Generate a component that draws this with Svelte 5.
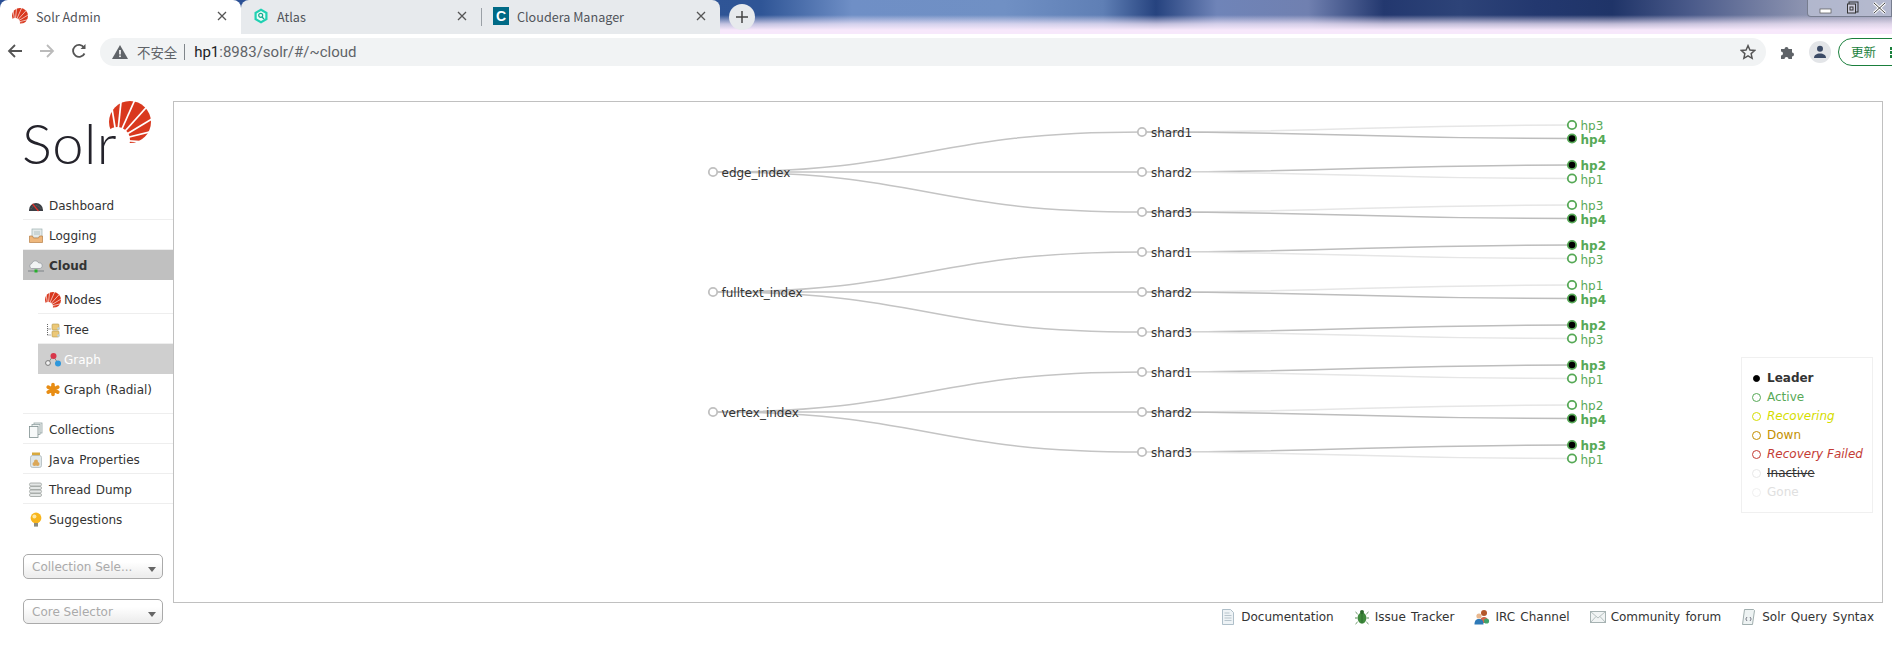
<script>
  // tree layout: every host pair sits 40px apart, shards 40px, collections 120px
  const collections = [
    { name: 'edge_index', shards: [
      [['hp3', false], ['hp4', true]], [['hp2', true], ['hp1', false]], [['hp3', false], ['hp4', true]]
    ] },
    { name: 'fulltext_index', shards: [
      [['hp2', true], ['hp3', false]], [['hp1', false], ['hp4', true]], [['hp2', true], ['hp3', false]]
    ] },
    { name: 'vertex_index', shards: [
      [['hp3', true], ['hp1', false]], [['hp2', false], ['hp4', true]], [['hp3', true], ['hp1', false]]
    ] }
  ];

  const colX = 539, shardX = 968, hostX = 1398;

  function curve(x0, y0, x1, y1) {
    const m = (x0 + x1) / 2;
    return `M${x0},${y0} C${m},${y0} ${m},${y1} ${x1},${y1}`;
  }

  const nodes = collections.map((c, ci) => {
    const y = 70 + ci * 120;
    return {
      name: c.name,
      y,
      shards: c.shards.map((replicas, si) => {
        const sy = y - 40 + si * 40;
        return {
          name: `shard${si + 1}`,
          y: sy,
          hosts: replicas.map(([name, leader], ri) => ({ name, leader, y: sy - 7 + ri * 13.5 }))
        };
      })
    };
  });

  const mainNav = [
    { label: 'Dashboard', icon: 'gauge' },
    { label: 'Logging', icon: 'tray' },
    { label: 'Cloud', icon: 'cloud', active: true }
  ];
  const subNav = [
    { label: 'Nodes', icon: 'sun' },
    { label: 'Tree', icon: 'tree' },
    { label: 'Graph', icon: 'graph', active: true },
    { label: 'Graph (Radial)', icon: 'star' }
  ];
  const lowerNav = [
    { label: 'Collections', icon: 'pages' },
    { label: 'Java Properties', icon: 'jar' },
    { label: 'Thread Dump', icon: 'stack' },
    { label: 'Suggestions', icon: 'bulb' }
  ];
  const legend = [
    { label: 'Leader', cls: 'leader' },
    { label: 'Active', cls: 'active' },
    { label: 'Recovering', cls: 'recovering' },
    { label: 'Down', cls: 'down' },
    { label: 'Recovery Failed', cls: 'failed' },
    { label: 'Inactive', cls: 'inactive' },
    { label: 'Gone', cls: 'gone' }
  ];
  const footer = [
    { label: 'Documentation', icon: 'doc' },
    { label: 'Issue Tracker', icon: 'bug' },
    { label: 'IRC Channel', icon: 'people' },
    { label: 'Community forum', icon: 'mail' },
    { label: 'Solr Query Syntax', icon: 'query' }
  ];
  const tabs = [
    { label: 'Solr Admin', icon: 'sun', active: true },
    { label: 'Atlas', icon: 'atlas' },
    { label: 'Cloudera Manager', icon: 'cloudera' }
  ];

  // sunburst rays, fanned out from the lower left of the disc
  const rayAngles = [-99, -84, -66, -48, -31, -14, 4];
</script>

{#snippet sunburst(size)}
  <svg width={size} height={size} viewBox="0 0 42 42">
    <circle cx="21" cy="21" r="21" fill="#d9381e" />
    {#each rayAngles as a}
      <line x1="8" y1="39" x2={8 + 60 * Math.cos((a * Math.PI) / 180)} y2={39 + 60 * Math.sin((a * Math.PI) / 180)} stroke="#fff" stroke-width="1.7" />
    {/each}
    <circle cx="8" cy="39" r="13" fill="#fff" />
    <path d="M0 42 L0 30 L14 42 Z" fill="#fff" />
  </svg>
{/snippet}

{#snippet icon(name)}
  {#if name === 'sun'}
    {@render sunburst(16)}
  {:else}
    <svg width="16" height="16" viewBox="0 0 16 16">
      {#if name === 'gauge'}
        <path d="M1 12 A7 7 0 0 1 15 12 L15 13 L1 13 Z" fill="#3c3f45" />
        <path d="M3 11 A5.4 5.4 0 0 1 13 11" fill="none" stroke="#777" stroke-width=".8" stroke-dasharray="1 1" />
        <line x1="4.5" y1="6" x2="10.5" y2="13" stroke="#e0312a" stroke-width="1.2" />
      {:else if name === 'tray'}
        <rect x="4" y="1" width="10" height="9" fill="#e4eaea" stroke="#9db1b1" stroke-width=".7" />
        <path d="M6 4h6M6 6h6" stroke="#9db1b1" stroke-width=".7" />
        <path d="M1.5 8h3l1 2h5l1-2h3v6.5h-13z" fill="#eeb77c" stroke="#b87f46" stroke-width=".7" />
      {:else if name === 'cloud'}
        <path d="M3.5 10.5a2.6 2.6 0 0 1 .3-5 3.6 3.6 0 0 1 6.8-.6 2.9 2.9 0 0 1 1.6 5.6z" fill="#f1f3f4" stroke="#8e9499" stroke-width=".7" />
        <path d="M0 13h16" stroke="#7d8287" />
        <rect x="6.5" y="11.5" width="3" height="3" fill="#27b02c" />
      {:else if name === 'tree'}
        <path d="M2.5 2v11M2.5 7h4M2.5 13h4" stroke="#666" stroke-dasharray="1 1" fill="none" />
        <rect x="7" y="2" width="7" height="6" rx="1" fill="#ecc877" stroke="#b3974f" stroke-width=".6" />
        <rect x="7" y="9" width="7" height="6" rx="1" fill="#ecc877" stroke="#b3974f" stroke-width=".6" />
        <circle cx="13.5" cy="6.5" r="1.3" fill="#bcd3de" /><circle cx="13.5" cy="13.5" r="1.3" fill="#bcd3de" />
      {:else if name === 'graph'}
        <path d="M3 11 L8 4 L13 11" stroke="#888" fill="none" />
        <circle cx="8.5" cy="4" r="3" fill="#d8374a" />
        <circle cx="13" cy="11.5" r="3" fill="#2e97dc" />
        <circle cx="3" cy="11" r="2.4" fill="#f2f2f2" stroke="#777" />
      {:else if name === 'star'}
        <g stroke="#e88d14" stroke-width="3.6" stroke-linecap="round">
          <path d="M8 2.5v10M3.2 5.2l9.6 5M12.8 5.2l-9.6 5" />
        </g>
      {:else if name === 'pages'}
        <rect x="6" y="1" width="8" height="10" fill="#eef2f2" stroke="#93a3a3" stroke-width=".8" />
        <rect x="4" y="2.5" width="8" height="10" fill="#eef2f2" stroke="#93a3a3" stroke-width=".8" />
        <rect x="1.5" y="4.5" width="8.5" height="11" fill="#f7f9f9" stroke="#7f9090" stroke-width=".8" />
      {:else if name === 'jar'}
        <rect x="4" y="0.5" width="8" height="3" fill="#d8a93e" />
        <rect x="2.5" y="3.5" width="11" height="12" rx="2" fill="#dfe7ea" stroke="#a8b2b6" stroke-width=".7" />
        <circle cx="6.5" cy="12" r="2" fill="#dba85a" /><circle cx="9.5" cy="12" r="2" fill="#dba85a" /><circle cx="8" cy="9.5" r="2" fill="#dba85a" />
      {:else if name === 'stack'}
        <g fill="#e4e7e6" stroke="#9a9f9d" stroke-width=".8">
          <rect x="1.5" y="1" width="12" height="3" rx="1.4" />
          <rect x="1.5" y="4.5" width="12" height="3" rx="1.4" />
          <rect x="1.5" y="8" width="12" height="3" rx="1.4" />
          <rect x="1.5" y="11.5" width="12" height="3" rx="1.4" />
        </g>
      {:else if name === 'bulb'}
        <circle cx="8" cy="6" r="5.4" fill="#f8b51c" />
        <circle cx="6.4" cy="4.4" r="2" fill="#fde9a5" />
        <rect x="6" y="11" width="4" height="3.6" fill="#8b8b80" />
      {:else if name === 'doc'}
        <path d="M2.5 .5h8l3 3v12h-11z" fill="#eef3f6" stroke="#9db0bc" stroke-width=".8" />
        <path d="M4.5 4h5M4.5 6.5h7M4.5 9h7M4.5 11.5h7" stroke="#a9b9c3" stroke-width=".8" />
      {:else if name === 'bug'}
        <ellipse cx="8" cy="9" rx="4.4" ry="5.6" fill="#3f8a3c" />
        <circle cx="8" cy="3" r="2" fill="#2c6a2c" />
        <path d="M3.6 5L1.5 3M3.4 9H1M3.6 13L1.5 15M12.4 5l2.1-2M12.6 9H15M12.4 13l2.1 2M8 4v10.5" stroke="#2c6a2c" stroke-width=".8" />
      {:else if name === 'people'}
        <circle cx="10" cy="4" r="3" fill="#b4582a" />
        <path d="M6 14c0-4 1-6 4-6s4 2 4 6z" fill="#d1694a" />
        <circle cx="5" cy="7" r="2.6" fill="#e9b88f" />
        <path d="M.5 15.5c0-4 1.6-5.5 4.5-5.5s4.5 1.5 4.5 5.5z" fill="#2e7ab8" />
        <circle cx="12.5" cy="12" r="2.6" fill="#3fa36b" />
      {:else if name === 'mail'}
        <rect x=".5" y="2.5" width="15" height="11" fill="#f1f4f4" stroke="#a6b2b2" />
        <path d="M.5 2.5L8 9l7.5-6.5M.5 13.5L6 7.5M15.5 13.5L10 7.5" fill="none" stroke="#a6b2b2" stroke-width=".8" />
      {:else if name === 'query'}
        <path d="M3.5 .5h9l1 1-2 14h-10z" fill="#eef3f3" stroke="#8a9a9a" stroke-width=".8" />
        <path d="M6 8L4.8 10 6 12M9 8l1.2 2L9 12" fill="none" stroke="#556" stroke-width=".8" />
      {:else if name === 'atlas'}
        <path d="M8 .5l6.5 3.7v7.6L8 15.5 1.5 11.8V4.2z" fill="#1fd1b2" />
        <path d="M8 3l4.3 2.5v5L8 13l-4.3-2.5v-5z" fill="#e9fbf7" />
        <circle cx="7.7" cy="7.3" r="2" fill="none" stroke="#19a98f" stroke-width="1.2" />
        <path d="M9 9l2 2" stroke="#19a98f" stroke-width="1.2" />
      {/if}
    </svg>
  {/if}
{/snippet}

<div class="tabstrip">
  {#each tabs as tab, i}
    <div class="tab" class:on={tab.active} class:sep={i === 2}>
      {#if tab.icon === 'cloudera'}
        <span class="cloudera">C</span>
      {:else}
        {@render icon(tab.icon)}
      {/if}
      <span class="tab-label">{tab.label}</span>
      <svg class="tab-x" width="10" height="10" viewBox="0 0 10 10"><path d="M1 1l8 8M9 1l-8 8" stroke="#555" stroke-width="1.3" /></svg>
    </div>
  {/each}
  <div class="newtab">
    <svg width="12" height="12" viewBox="0 0 12 12"><path d="M6 0v12M0 6h12" stroke="#444" stroke-width="1.5" /></svg>
  </div>
  <div class="winctl">
    <svg width="14" height="14" viewBox="0 0 14 14"><rect x="1" y="8" width="11" height="4" fill="#fff" stroke="#555" stroke-width=".7" /></svg>
    <svg width="14" height="14" viewBox="0 0 14 14"><rect x="3" y="1" width="9" height="10" fill="none" stroke="#333" /><rect x="1.5" y="3" width="8" height="9" fill="#ccd" stroke="#333" /><rect x="4" y="6" width="3" height="3" fill="none" stroke="#333" /></svg>
    <svg class="winx" width="14" height="14" viewBox="0 0 14 14"><path d="M1 2l11 10M12 2L1 12" stroke="#fff" stroke-width="3" /><path d="M1 2l11 10M12 2L1 12" stroke="#444" stroke-width="1" /></svg>
  </div>
</div>

<div class="toolbar">
  <svg class="tool" width="16" height="16" viewBox="0 0 16 16"><path d="M15 8H2M8 2L2 8l6 6" fill="none" stroke="#555" stroke-width="1.8" /></svg>
  <svg class="tool" width="16" height="16" viewBox="0 0 16 16"><path d="M1 8h13M8 2l6 6-6 6" fill="none" stroke="#bbb" stroke-width="1.8" /></svg>
  <svg class="tool" width="16" height="16" viewBox="0 0 16 16"><path d="M13.5 10.5A6 6 0 1 1 13 4.5" fill="none" stroke="#555" stroke-width="1.8" /><path d="M14.5 1v5h-5z" fill="#555" /></svg>
  <div class="addr">
    <svg width="16" height="14" viewBox="0 0 16 14"><path d="M8 0l8 14H0z" fill="#5f6368" /><rect x="7.2" y="5" width="1.6" height="4.5" fill="#fff" /><rect x="7.2" y="10.5" width="1.6" height="1.6" fill="#fff" /></svg>
    <span class="insecure">不安全</span>
    <span class="addr-sep"></span>
    <span class="url"><b>hp1</b>:8983/solr/#/~cloud</span>
    <svg class="star" width="16" height="16" viewBox="0 0 24 24"><path d="M12 2.5l2.9 6.5 7.1.7-5.3 4.7 1.5 7-6.2-3.6-6.2 3.6 1.5-7L2 9.7 9.1 9z" fill="none" stroke="#555" stroke-width="2.2" /></svg>
  </div>
  <svg class="puzzle" width="16" height="16" viewBox="0 0 16 16"><path d="M1 5h3.5a2 2 0 1 1 4 0H12v3.5a2 2 0 1 1 0 4V15H8.5a2 2 0 1 0-4 0H1v-3.5a2 2 0 1 0 0-4z" fill="#5f6368" /></svg>
  <div class="avatar">
    <svg width="14" height="14" viewBox="0 0 14 14"><circle cx="7" cy="3.8" r="3" fill="#3c4b66" /><path d="M1 13c0-3 2.5-4.5 6-4.5s6 1.5 6 4.5z" fill="#3c4b66" /></svg>
  </div>
  <div class="update">更新<span class="dots"></span></div>
</div>

<div class="page">
  <aside class="sidebar">
    <div class="logo">
      <span class="sun">{@render sunburst(42)}</span>
      <span class="wordmark">Solr</span>
    </div>
    <ul class="nav">
      {#each mainNav as item}
        <li class:on={item.active}>{@render icon(item.icon)}<span>{item.label}</span></li>
      {/each}
    </ul>
    <ul class="nav sub">
      {#each subNav as item}
        <li class:on={item.active}>{@render icon(item.icon)}<span>{item.label}</span></li>
      {/each}
    </ul>
    <ul class="nav lower">
      {#each lowerNav as item}
        <li>{@render icon(item.icon)}<span>{item.label}</span></li>
      {/each}
    </ul>
    <div class="select first">Collection Sele...</div>
    <div class="select">Core Selector</div>
  </aside>

  <main class="main">
    <div class="panel">
      <svg class="graph" width="1708" height="499">
        {#each nodes as c}
          {#each c.shards as s}
            <path class="link" d={curve(colX, c.y, shardX, s.y)} />
            {#each s.hosts as h}
              <path class="link" class:lead={h.leader} class:replica={!h.leader} d={curve(shardX, s.y, hostX, h.y)} />
            {/each}
          {/each}
        {/each}
        {#each nodes as c}
          <circle class="node" cx={colX} cy={c.y} r="4.2" />
          <text x={colX + 8.5} y={c.y + 5}>{c.name}</text>
          {#each c.shards as s}
            <circle class="node" cx={shardX} cy={s.y} r="4.2" />
            <text x={shardX + 9} y={s.y + 5}>{s.name}</text>
            {#each s.hosts as h}
              <circle class="host" class:lead={h.leader} cx={hostX} cy={h.y} r="4.2" />
              <text class="hostname" class:lead={h.leader} x={hostX + 8.5} y={h.y + 5}>{h.name}</text>
            {/each}
          {/each}
        {/each}
      </svg>
      <ul class="legend">
        {#each legend as l}
          <li class={l.cls}><i></i><span>{l.label}</span></li>
        {/each}
      </ul>
    </div>
    <div class="footer">
      {#each footer as f}
        <span class="flink">{@render icon(f.icon)}<span>{f.label}</span></span>
      {/each}
    </div>
  </main>
</div>

<style>
  :global(body) {
    margin: 0;
    background: #fff;
    overflow: hidden;
    font-family: "DejaVu Sans", sans-serif;
    font-size: 12px;
    color: #333;
  }
  .tabstrip {
    position: relative;
    height: 34px;
    display: flex;
    background:
      linear-gradient(to bottom, rgba(246, 232, 250, 0) 15px, rgba(246, 232, 250, 0.75) 24px, #f7e8fb 30px),
      linear-gradient(to right, #2a4f95 0, #2f5596 761px, #6f8fc6 852px, #7090c4 1004px, #5f7fb5 1103px, #26437f 1156px, #6f84b8 1217px, #7080b0 1308px, #23386f 1384px, #2d4378 1460px, #23386f 1536px, #1f3468 1612px, #4a5a8a 1690px, #8c93b0 1803px, #9a9db6 1892px);
    font-family: "Noto Sans CJK SC", "Noto Sans", sans-serif;
  }
  .tab {
    width: 240px;
    box-sizing: border-box;
    height: 34px;
    padding: 0 12px 2px 12px;
    display: flex;
    align-items: center;
    gap: 8px;
    background: #e7eaed;
    font-size: 12.6px;
    color: #50545a;
    position: relative;
  }
  .tab:nth-child(2) { border-radius: 8px 0 0 0; }
  .tab:nth-child(3) { border-radius: 0 8px 0 0; width: 239px; }
  .tab.on {
    background: #fff;
    border-radius: 8px 8px 0 0;
    width: 241px;
  }
  .tab.sep::before {
    content: "";
    position: absolute;
    left: 0;
    top: 8px;
    height: 18px;
    width: 1px;
    background: #9aa0a6;
  }
  .tab-label { flex: 1; }
  .tab-x { margin-right: 2px; }
  .cloudera {
    width: 16px;
    height: 18px;
    background: #006a86;
    color: #fff;
    font: bold 14px/18px "Liberation Sans", sans-serif;
    text-align: center;
  }
  .newtab {
    width: 26px;
    height: 26px;
    margin: 4px 0 0 9px;
    border-radius: 50%;
    background: #e7eaed;
    display: flex;
    align-items: center;
    justify-content: center;
  }
  .winctl {
    position: absolute;
    left: 1807px;
    top: 0;
    width: 85px;
    height: 17px;
    box-sizing: border-box;
    border: 1px solid #777d8f;
    border-top: 0;
    border-radius: 0 0 0 4px;
    background: rgba(190, 195, 215, 0.75);
    display: flex;
    align-items: flex-start;
    gap: 13px;
    padding: 1px 0 0 11px;
  }
  .toolbar {
    height: 34px;
    display: flex;
    align-items: center;
    background: #fff;
    font-family: "Noto Sans CJK SC", "Noto Sans", sans-serif;
    padding-left: 7px;
    box-sizing: border-box;
    overflow: hidden;
  }
  .toolbar > * { flex: none; }
  .tool { margin-right: 16px; }
  .tool:nth-child(3) { margin-right: 13px; }
  .addr {
    width: 1666px;
    height: 28px;
    box-sizing: border-box;
    border-radius: 14px;
    background: #f1f3f4;
    display: flex;
    align-items: center;
    padding: 0 10px 0 12px;
    margin-top: 2px;
  }
  .insecure {
    font-size: 13.4px;
    color: #5f6368;
    margin-left: 9px;
  }
  .addr-sep {
    width: 1px;
    height: 16px;
    background: #80868b;
    margin: 0 9px 0 7px;
  }
  .url {
    font-family: Roboto, sans-serif;
    font-size: 15px;
    color: #5f6368;
    flex: 1;
  }
  .url b { font-weight: 400; color: #202124; }
  .puzzle { margin: 2px 0 0 14px; }
  .avatar {
    width: 22px;
    height: 22px;
    margin: 2px 0 0 13px;
    border-radius: 50%;
    background: #e3e5e8;
    display: flex;
    align-items: center;
    justify-content: center;
  }
  .update {
    margin: 2px 0 0 7px;
    width: 80px;
    height: 28px;
    box-sizing: border-box;
    border: 1px solid #1a7f3c;
    border-radius: 14px;
    color: #1a7f3c;
    font-size: 12.5px;
    line-height: 26px;
    padding-left: 12px;
    position: relative;
  }
  .dots {
    position: absolute;
    left: 51px;
    top: 8px;
    width: 3px;
    height: 3px;
    background: #1a7f3c;
    box-shadow: 0 4px 0 #1a7f3c, 0 8px 0 #1a7f3c;
  }
  .page {
    display: flex;
    padding: 33px 9px 0 23px;
  }
  .sidebar { width: 150px; flex: none; }
  .logo {
    position: relative;
    height: 89px;
    box-sizing: border-box;
  }
  .wordmark {
    position: absolute;
    left: -1px;
    top: 4px;
    font-family: Lato, "Open Sans", sans-serif;
    font-weight: 300;
    font-size: 56px;
    line-height: 76px;
    color: #24232b;
    letter-spacing: 0.5px;
  }
  .sun {
    position: absolute;
    left: 86px;
    top: 0;
    line-height: 0;
  }
  .nav { list-style: none; margin: 0; padding: 0; }
  .nav li {
    height: 30px;
    box-sizing: border-box;
    display: flex;
    align-items: center;
    gap: 5px;
    padding: 2px 0 0 5px;
    border-bottom: 1px solid #eee;
    word-spacing: 1px;
  }
  .nav > li:last-child { border-bottom: 0; }
  .nav li.on { background: #c0c0c0; font-weight: bold; }
  .sub { margin: 4px 0 9px 15px; }
  .sub li { padding-left: 7px; gap: 3px; }
  .sub li.on { background: #cfcfcf; color: #fff; font-weight: normal; border: 0; }
  .lower { border-top: 1px solid #eee; }
  .select {
    width: 140px;
    height: 25px;
    box-sizing: border-box;
    margin-top: 20px;
    border: 1px solid #aaa;
    border-radius: 5px;
    background: linear-gradient(to bottom, #fff 30%, #eee 90%);
    color: #aaa;
    line-height: 25px;
    padding-left: 8px;
    position: relative;
  }
  .select::after {
    content: "";
    position: absolute;
    right: 6px;
    top: 12px;
    border: 4px solid transparent;
    border-top: 5px solid #666;
  }
  .main { flex: 1; min-width: 0; }
  .panel {
    position: relative;
    height: 502px;
    box-sizing: border-box;
    border: 1px solid #c0c0c0;
  }
  .graph { display: block; }
  .graph text { font-size: 12px; fill: #333; font-family: "DejaVu Sans", sans-serif; }
  .link { fill: none; stroke: #c4c4c4; stroke-width: 1.5; }
  .link.replica { stroke: #e6e6e6; }
  .link.lead { stroke: #bdbdbd; }
  .node { fill: #fff; stroke: #c0c0c0; stroke-width: 1.8; }
  .host { fill: #fff; stroke: #57a957; stroke-width: 1.8; }
  .host.lead { fill: #000; }
  .graph .hostname { fill: #57a957; }
  .graph .hostname.lead { font-weight: bold; }
  .legend {
    position: absolute;
    right: 9px;
    top: 255px;
    width: 132px;
    height: 156px;
    box-sizing: border-box;
    margin: 0;
    padding: 11px 0 0 10px;
    list-style: none;
    border: 1px solid #f0f0f0;
    background: #fff;
  }
  .legend li {
    height: 19px;
    line-height: 19px;
    display: flex;
    align-items: center;
    gap: 6px;
    white-space: nowrap;
  }
  .legend i {
    width: 7px;
    height: 7px;
    flex: none;
    border: 1.5px solid #ccc;
    border-radius: 50%;
  }
  .legend .leader { font-weight: bold; }
  .legend .leader i { width: 5px; height: 5px; margin: 0 1px; background: #000; border-color: #000; }
  .legend .active { color: #57a957; }
  .legend .active i { border-color: #57a957; }
  .legend .recovering { color: #d5dd00; font-style: italic; }
  .legend .recovering i { border-color: #d5dd00; }
  .legend .down { color: #c48f00; }
  .legend .down i { border-color: #c48f00; }
  .legend .failed { color: #c43c35; font-style: italic; }
  .legend .failed i { border-color: #c43c35; }
  .legend .inactive span { text-decoration: line-through; }
  .legend .inactive i { border-color: #e8e8e8; }
  .legend .gone { color: #e0e0e0; }
  .legend .gone i { border-color: #f0f0f0; }
  .footer {
    display: flex;
    justify-content: flex-end;
    gap: 20px;
    padding: 6px 9px 0 0;
    word-spacing: 1.5px;
  }
  .flink { display: flex; align-items: center; gap: 5px; }
</style>
